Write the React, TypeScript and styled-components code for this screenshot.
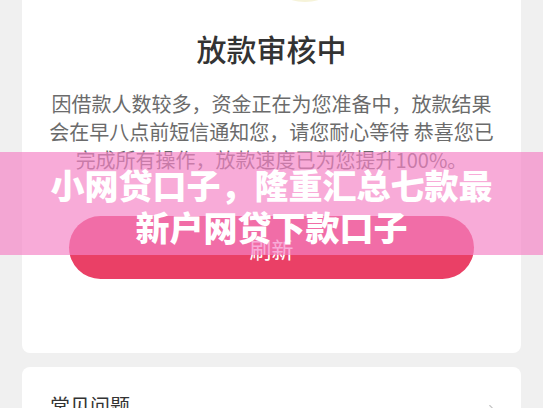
import React from 'react';
import styled, { createGlobalStyle } from 'styled-components';
import { ChevronRight } from 'lucide-react';

const GlobalStyle = createGlobalStyle`
  html, body {
    margin: 0;
    padding: 0;
    background: #f0f0f0;
    font-family: "Noto Sans CJK SC", "Noto Sans", sans-serif;
  }
`;

const Page = styled.div`
  position: relative;
  width: 543px;
  height: 408px;
  overflow: hidden;
  padding: 0 22px;
  box-sizing: border-box;
  display: flex;
  flex-direction: column;
  gap: 14px;
`;

const Card = styled.div`
  background: #ffffff;
  border-radius: 0 0 8px 8px;
  display: flex;
  flex-direction: column;
  align-items: center;
  padding-bottom: 74px;
`;

const Illustration = styled.svg`
  display: block;
  width: 100%;
  height: 3px;
`;

const Title = styled.h1`
  margin: 25px 0 0;
  font-size: 30px;
  line-height: 40px;
  font-weight: 500;
  color: #333333;
  text-align: center;
`;

const Message = styled.p`
  margin: 22px 24px 0;
  font-size: 20px;
  line-height: 28px;
  color: #6b6b6b;
  text-align: center;
`;

const RefreshButton = styled.button`
  margin-top: 42px;
  width: 405px;
  height: 63px;
  border: none;
  border-radius: 32px;
  background: #ea4066;
  color: #ffffff;
  font-family: inherit;
  font-size: 22px;
  cursor: pointer;
`;

const FaqCard = styled.div`
  background: #ffffff;
  border-radius: 8px 8px 0 0;
  padding: 25px 20px 0 28px;
  display: flex;
  align-items: center;
  justify-content: space-between;
  flex: 1;
`;

const FaqLabel = styled.span`
  font-size: 20px;
  line-height: 28px;
  color: #333333;
  align-self: flex-start;
`;

const FaqArrow = styled(ChevronRight)`
  align-self: flex-start;
  margin-top: 9px;
  color: #c4c4c4;
`;

const Banner = styled.div`
  position: absolute;
  left: 0;
  right: 0;
  top: 152px;
  height: 103px;
  box-sizing: border-box;
  padding: 12px 46px 0;
  background: rgba(244, 131, 197, 0.68);
  color: #ffffff;
  font-size: 34px;
  line-height: 42px;
  font-weight: 900;
  text-align: center;
`;

export default function App() {
  return (
    <>
      <GlobalStyle />
      <Page>
        <Card>
          <Illustration viewBox="0 0 499 3" preserveAspectRatio="none">
            <ellipse cx="283" cy="-4" rx="18" ry="6" fill="#f6f3d9" />
          </Illustration>
          <Title>放款审核中</Title>
          <Message>
            因借款人数较多，资金正在为您准备中，放款结果会在早八点前短信通知您，请您耐心等待 恭喜您已完成所有操作，放款速度已为您提升100%。
          </Message>
          <RefreshButton type="button">刷新</RefreshButton>
        </Card>
        <FaqCard>
          <FaqLabel>常见问题</FaqLabel>
          <FaqArrow size={18} strokeWidth={1.5} />
        </FaqCard>
        <Banner>小网贷口子，隆重汇总七款最新户网贷下款口子</Banner>
      </Page>
    </>
  );
}
